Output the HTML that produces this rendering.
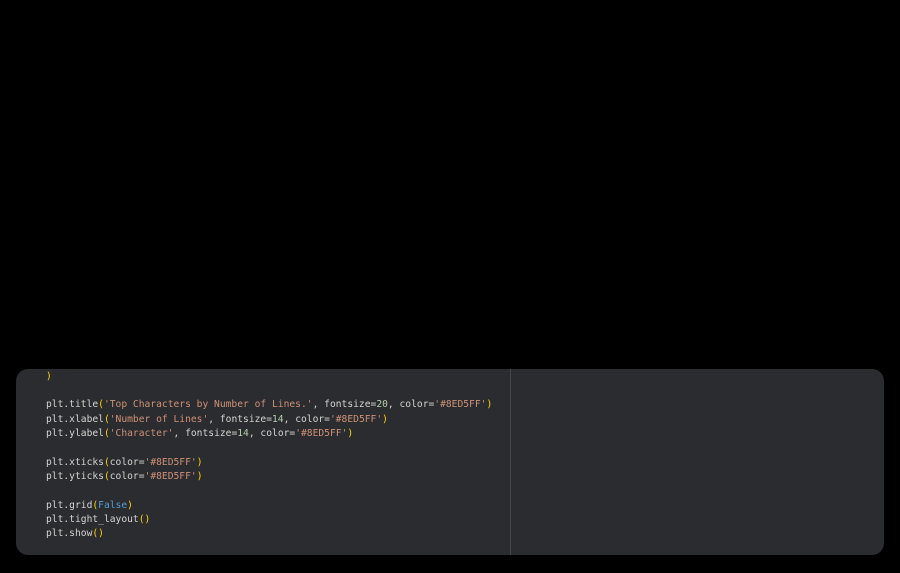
<!DOCTYPE html>
<html><head><style>
body{margin:0;background:#000;width:900px;height:573px;overflow:hidden;position:relative}
.p{position:absolute;left:16px;top:369px;width:868px;height:186px;background:#2b2c2f;border-radius:12px}
.d{position:absolute;left:494px;top:0;width:1px;height:186px;background:#45474b}
pre{position:absolute;left:30px;top:0.5px;margin:0;font-family:"DejaVu Sans Mono","Liberation Mono",monospace;font-size:9.63px;line-height:14.35px;color:#d4d4d4}
.s{color:#ce9178}.n{color:#b5cea8}.y{color:#ffd700}.b{color:#569cd6}
</style></head><body>
<div class="p"><div class="d"></div>
<pre><span class="y">)</span>

plt.title<span class="y">(</span><span class="s">'Top Characters by Number of Lines.'</span>, fontsize=<span class="n">20</span>, color=<span class="s">'#8ED5FF'</span><span class="y">)</span>
plt.xlabel<span class="y">(</span><span class="s">'Number of Lines'</span>, fontsize=<span class="n">14</span>, color=<span class="s">'#8ED5FF'</span><span class="y">)</span>
plt.ylabel<span class="y">(</span><span class="s">'Character'</span>, fontsize=<span class="n">14</span>, color=<span class="s">'#8ED5FF'</span><span class="y">)</span>

plt.xticks<span class="y">(</span>color=<span class="s">'#8ED5FF'</span><span class="y">)</span>
plt.yticks<span class="y">(</span>color=<span class="s">'#8ED5FF'</span><span class="y">)</span>

plt.grid<span class="y">(</span><span class="b">False</span><span class="y">)</span>
plt.tight_layout<span class="y">()</span>
plt.show<span class="y">()</span></pre>
</div>
</body></html>
